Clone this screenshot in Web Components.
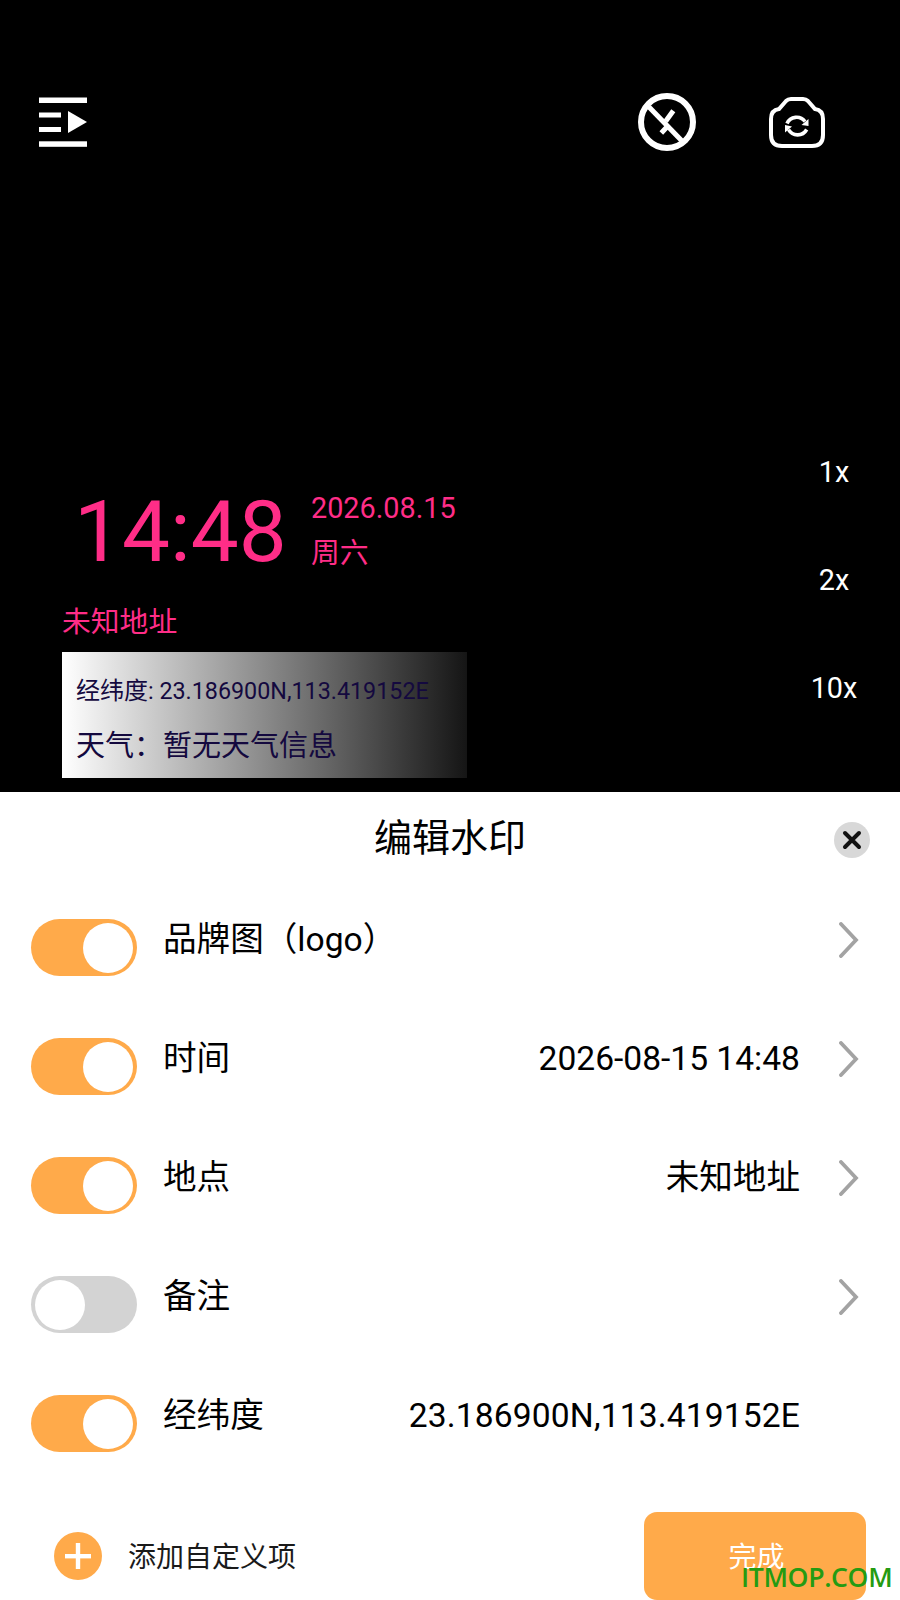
<!DOCTYPE html>
<html lang="zh">
<head>
<meta charset="utf-8">
<title>编辑水印</title>
<style>
  html, body { margin: 0; padding: 0; background: #000; }
  body { width: 900px; height: 1600px; overflow: hidden; position: relative;
    font-family: Roboto, "Noto Sans CJK SC", sans-serif; }
</style>
</head>
<body>
<camera-view></camera-view>
<edit-sheet>
  <sheet-row label="品牌图（logo）" on arrow></sheet-row>
  <sheet-row label="时间" value="2026-08-15 14:48" on arrow></sheet-row>
  <sheet-row label="地点" value="未知地址" on arrow></sheet-row>
  <sheet-row label="备注" arrow></sheet-row>
  <sheet-row label="经纬度" value="23.186900N,113.419152E" on style="--value-spacing: .14px"></sheet-row>
</edit-sheet>
<site-mark></site-mark>

<script>
class CameraTopbar extends HTMLElement {
  constructor() {
    super();
    this.attachShadow({ mode: 'open' });
    this.shadowRoot.innerHTML = `
      <style>
        :host { display: flex; align-items: center; height: 58px; padding: 93px 75px 0 39px; }
        svg { display: block; }
        .menu { margin-right: auto; }
        .flash { margin-right: 73px; }
      </style>
      <svg class="menu" width="48" height="50" viewBox="0 0 48 50" fill="#fff">
        <rect x="0" y="0.5" width="48" height="5.5"/>
        <rect x="0" y="15.5" width="22" height="5"/>
        <rect x="0" y="30" width="22" height="5"/>
        <rect x="0" y="44.3" width="48" height="5.5"/>
        <path d="M29 14 L48 25 L29 36 Z"/>
      </svg>
      <svg class="flash" width="58" height="58" viewBox="0 0 58 58" fill="none" stroke="#fff" stroke-width="6">
        <circle cx="29" cy="29" r="26"/>
        <path d="M11 14 L44 48" stroke-width="5"/>
        <path d="M35.3 17.7 L27.7 28.3 M31 31.7 L23.3 40" stroke-width="5"/>
      </svg>
      <svg class="flip" width="56" height="51" viewBox="0 0 56 51" fill="none" stroke="#fff" stroke-width="4">
        <path d="M22 2 H34 Q37 2 39 4 L46 12 Q54 13 54 22 V38 Q54 49 43 49 H13 Q2 49 2 38 V22 Q2 13 10 12 L17 4 Q19 2 22 2 Z"/>
        <path d="M18 26.5 A10.5 10.5 0 0 1 36 24.5" stroke-width="3.6"/>
        <path d="M37.7 32.5 A10.5 10.5 0 0 1 19.5 32.7" stroke-width="3.6"/>
        <path d="M39.5 22 L39.5 29 L32.5 28 Z" fill="#fff" stroke="none"/>
        <path d="M16 35.5 L16 28 L23 29.5 Z" fill="#fff" stroke="none"/>
      </svg>
    `;
  }
}

class WatermarkPreview extends HTMLElement {
  constructor() {
    super();
    this.attachShadow({ mode: 'open' });
    this.shadowRoot.innerHTML = `
      <style>
        :host { display: block; width: 405px; color: #ff2d87; padding-bottom: 14px; }
        .clock { display: flex; align-items: flex-start; padding-left: 12px; }
        .time { font-size: 85.4px; line-height: 100px; width: 237px; }
        .date { font-size: 28.8px; line-height: 45px; padding-top: 4px; }
        .place { font-size: 28.8px; line-height: 40px; margin-top: 20px; }
        .panel {
          height: 126px; margin-top: 10px; padding: 6px 0 0 14px; box-sizing: border-box;
          background: linear-gradient(90deg, #fff, #151515);
          color: #14093f; display: flex; flex-direction: column; justify-content: center;
        }
        .coords { font-size: 24px; line-height: 40px; }
        .coords span { font-size: 23.3px; }
        .weather { font-size: 29px; line-height: 40px; margin-top: 15px; }
      </style>
      <div class="clock">
        <div class="time">14:48</div>
        <div class="date">2026.08.15<br>周六</div>
      </div>
      <div class="place">未知地址</div>
      <div class="panel">
        <div class="coords">经纬度<span>: 23.186900N,113.419152E</span></div>
        <div class="weather">天气：暂无天气信息</div>
      </div>
    `;
  }
}

class ZoomRail extends HTMLElement {
  constructor() {
    super();
    this.attachShadow({ mode: 'open' });
    this.shadowRoot.innerHTML = `
      <style>
        :host { display: flex; flex-direction: column; width: 80px; margin-right: 26px; margin-bottom: 50px; color: #fff; font-size: 28.8px; }
        div { height: 108px; display: flex; align-items: center; justify-content: center; }
      </style>
      <div>1x</div><div>2x</div><div>10x</div>
    `;
  }
}

class CameraView extends HTMLElement {
  constructor() {
    super();
    this.attachShadow({ mode: 'open' });
    this.shadowRoot.innerHTML = `
      <style>
        :host { display: flex; flex-direction: column; height: 792px; background: #000; }
        .bottom { display: flex; justify-content: space-between; align-items: flex-end; margin-top: auto; padding-left: 62px; }
      </style>
      <camera-topbar></camera-topbar>
      <div class="bottom">
        <watermark-preview></watermark-preview>
        <zoom-rail></zoom-rail>
      </div>
    `;
  }
}

class ToggleSwitch extends HTMLElement {
  constructor() {
    super();
    this.attachShadow({ mode: 'open' });
    this.shadowRoot.innerHTML = `
      <style>
        :host { display: flex; align-items: center; justify-content: flex-start; width: 106px; height: 57px; box-sizing: border-box;
          padding: 0 4px; border-radius: 29px; background: #d3d3d3; }
        :host([on]) { justify-content: flex-end; background: #ffaa4a; }
        i { display: block; width: 50px; height: 50px; border-radius: 50%; background: #fff; }
      </style>
      <i></i>
    `;
  }
}

class SheetRow extends HTMLElement {
  constructor() {
    super();
    this.attachShadow({ mode: 'open' });
    this.shadowRoot.innerHTML = `
      <style>
        :host { display: flex; flex: none; align-items: flex-start; height: 119px; padding: 0 41px 0 31px; color: #000; }
        toggle-switch { flex: none; margin-right: 26px; }
        .label, .value { font-size: 33.6px; line-height: 44px; margin-top: -1px; }
        .value { margin-left: auto; white-space: nowrap; letter-spacing: var(--value-spacing, 0); }
        .arrow { flex: none; width: 59px; height: 44px; display: flex; justify-content: flex-end; }
        svg { display: block; margin-top: 3px; }
      </style>
      <toggle-switch></toggle-switch>
      <div class="label"></div>
      <div class="value"></div>
      <div class="arrow"><svg width="20" height="36" viewBox="0 0 20 36" fill="none" stroke="#a3a3a3" stroke-width="3.8" stroke-linecap="round"><path d="M2 2 L17 18 L2 34"/></svg></div>
    `;
  }
  connectedCallback() {
    const s = this.shadowRoot;
    s.querySelector('.label').textContent = this.getAttribute('label') || '';
    s.querySelector('.value').textContent = this.getAttribute('value') || '';
    if (this.hasAttribute('on')) s.querySelector('toggle-switch').setAttribute('on', '');
    if (!this.hasAttribute('arrow')) s.querySelector('.arrow svg').style.visibility = 'hidden';
  }
}

class EditSheet extends HTMLElement {
  constructor() {
    super();
    this.attachShadow({ mode: 'open' });
    this.shadowRoot.innerHTML = `
      <style>
        :host { display: flex; flex-direction: column; height: 808px; background: #fff; color: #000; }
        header { position: relative; flex: none; height: 127px; display: flex; justify-content: center; }
        h1 { margin: 21px 0 0; font-size: 38px; font-weight: 400; line-height: 50px; }
        .close { position: absolute; top: 30px; right: 30px; width: 36px; height: 36px; border-radius: 50%; background: #d8d8d8; display: flex; align-items: center; justify-content: center; }
        .rows { flex: none; height: 593px; }
        footer { flex: none; height: 88px; display: flex; align-items: flex-start; padding: 0 34px 0 54px; }
        .plus { flex: none; width: 48px; height: 48px; margin-top: 20px; border-radius: 50%; background: #ffaa4a; display: flex; align-items: center; justify-content: center; }
        .add { margin: 26px 0 0 26px; font-size: 28px; line-height: 40px; color: #1a1a1a; }
        button { margin-left: auto; width: 222px; height: 88px; border: 0; padding: 0 0 2px 3px; border-radius: 13px; background: #ffaa4a; color: #fff; font: inherit; font-size: 28px; }
        svg { display: block; }
      </style>
      <header>
        <h1>编辑水印</h1>
        <div class="close"><svg width="20" height="20" viewBox="0 0 20 20" stroke="#111" stroke-width="4" stroke-linecap="round"><path d="M3 3 L17 17 M17 3 L3 17"/></svg></div>
      </header>
      <div class="rows"><slot></slot></div>
      <footer>
        <div class="plus"><svg width="26" height="26" viewBox="0 0 26 26" fill="#fff"><rect x="0" y="11" width="26" height="4.4"/><rect x="10.8" y="0" width="4.4" height="26"/></svg></div>
        <div class="add">添加自定义项</div>
        <button>完成</button>
      </footer>
    `;
  }
}

class SiteMark extends HTMLElement {
  constructor() {
    super();
    this.attachShadow({ mode: 'open' });
    this.shadowRoot.innerHTML = `
      <style>
        :host { position: absolute; left: 741px; top: 1560px; color: #259b12; font: 600 26.6px/34px "Open Sans", sans-serif; letter-spacing: -0.35px; white-space: nowrap; }
      </style>
      ITMOP.COM
    `;
  }
}

customElements.define('camera-topbar', CameraTopbar);
customElements.define('watermark-preview', WatermarkPreview);
customElements.define('zoom-rail', ZoomRail);
customElements.define('camera-view', CameraView);
customElements.define('toggle-switch', ToggleSwitch);
customElements.define('sheet-row', SheetRow);
customElements.define('edit-sheet', EditSheet);
customElements.define('site-mark', SiteMark);
</script>
</body>
</html>
